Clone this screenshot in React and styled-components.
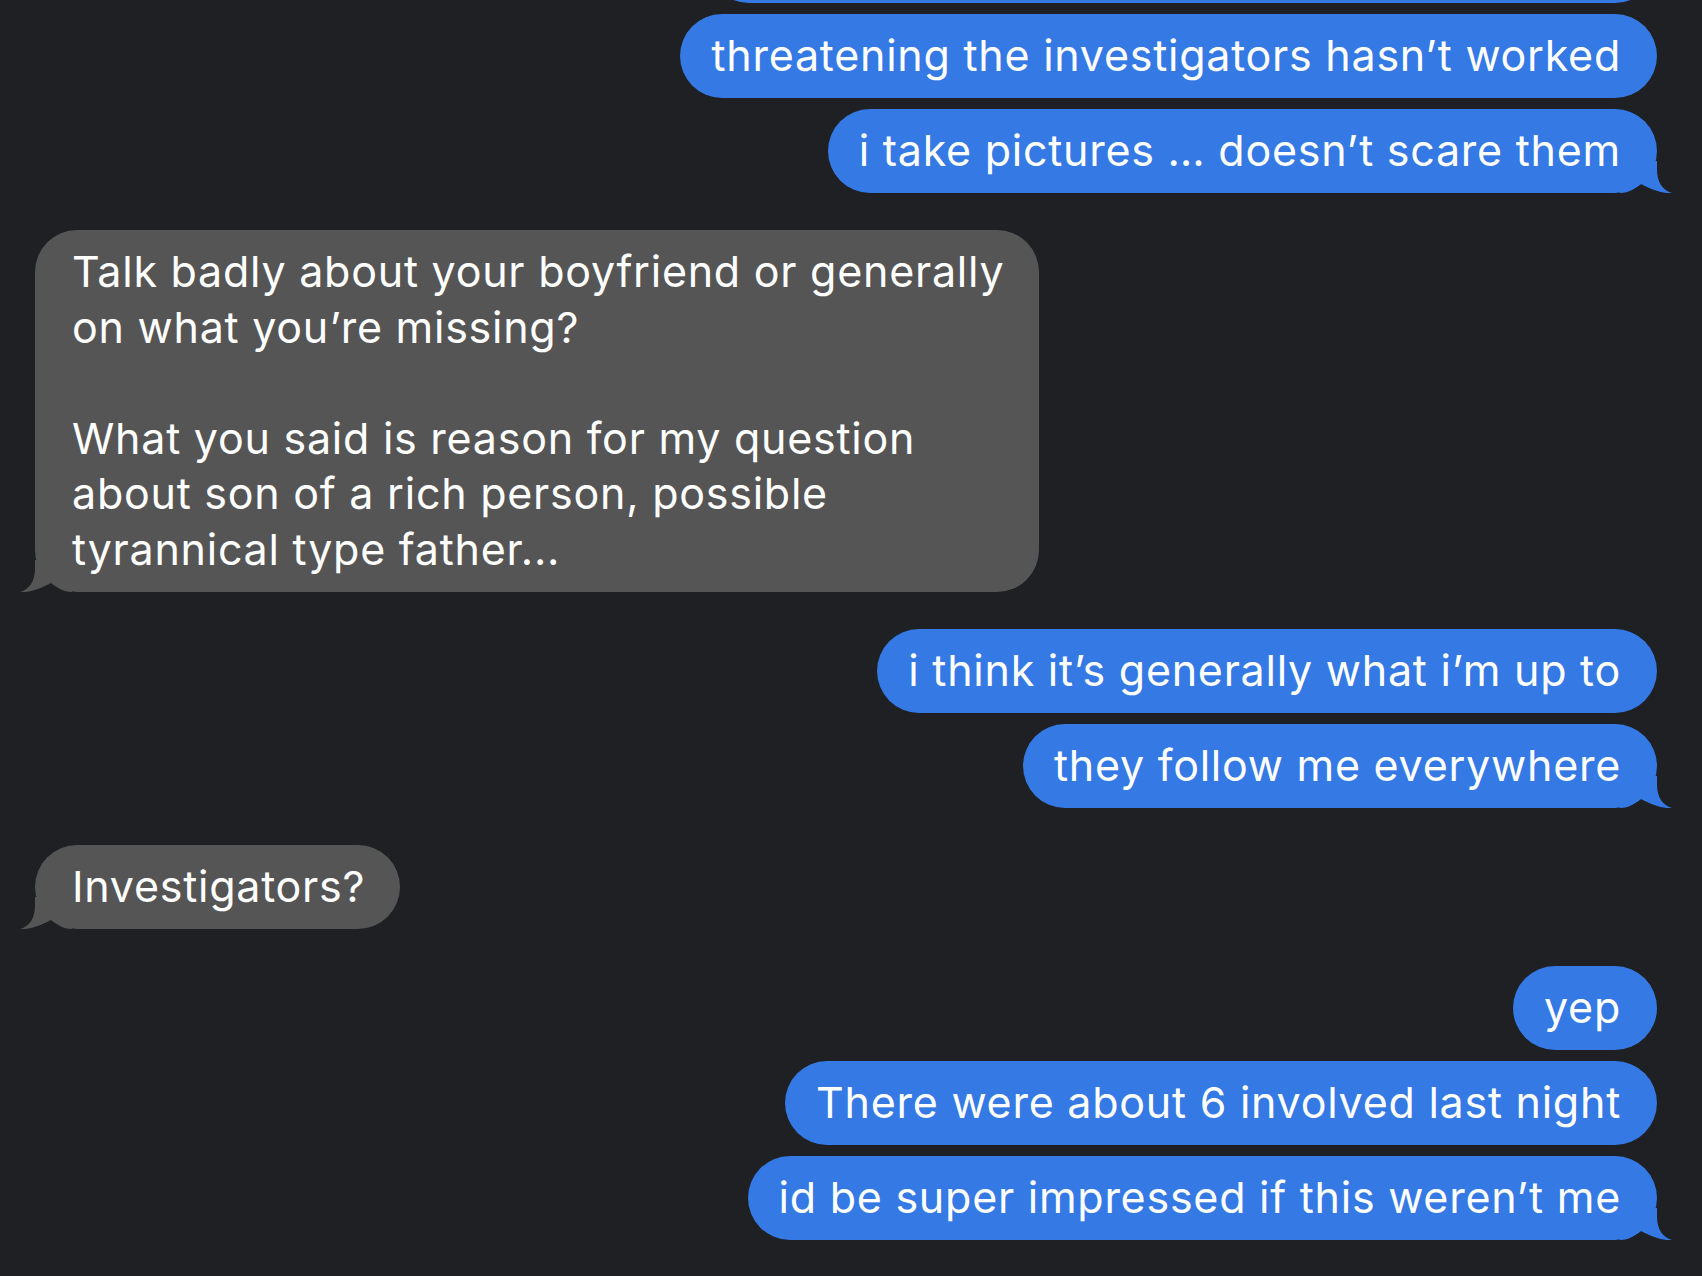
import styled, { createGlobalStyle } from "styled-components";

const GlobalStyle = createGlobalStyle`
  html, body {
    margin: 0;
    padding: 0;
    background: #1f2023;
  }
  body {
    font-family: Inter, "Noto Sans", "Liberation Sans", sans-serif;
    -webkit-font-smoothing: antialiased;
  }
`;

const Screen = styled.div`
  width: 1702px;
  height: 1276px;
  overflow: hidden;
  background: #1f2023;
  box-sizing: border-box;
  padding: 0 45px 0 35px;
`;

const Thread = styled.div`
  display: flex;
  flex-direction: column;
  gap: 37px;
  margin-top: -81px;
`;

const Group = styled.div`
  display: flex;
  flex-direction: column;
  align-items: ${(p) => (p.$mine ? "flex-end" : "flex-start")};
  gap: 11px;
`;

const Bubble = styled.div`
  position: relative;
  box-sizing: border-box;
  min-height: 84px;
  padding: ${(p) => (p.$mine ? "14.25px 36px 14.25px 31px" : "14.25px 35px 14.25px 37px")};
  border-radius: 42px;
  background: ${(p) => (p.$mine ? "#3479e4" : "#555556")};
  color: #ffffff;
  font-size: 43px;
  line-height: 55.5px;
  letter-spacing: 0.75px;
  white-space: pre-line;
`;

const TailShape = styled.svg`
  position: absolute;
  bottom: 0;
  width: 52px;
  height: 32px;
  ${(p) => (p.$mine ? "right: -15px;" : "left: -15px; transform: scaleX(-1);")}
  fill: ${(p) => (p.$mine ? "#3479e4" : "#555556")};
`;

function Tail({ mine }) {
  return (
    <TailShape $mine={mine} viewBox="0 0 52 32">
      <path d="M0,0 H37 V8 C37,21 42,29 52,32 C44,33 32,29 21,23 C16,27 9,32 0,32 Z" />
    </TailShape>
  );
}

function Message({ mine, tail, children }) {
  return (
    <Bubble $mine={mine}>
      {children}
      {tail && <Tail mine={mine} />}
    </Bubble>
  );
}

const groups = [
  {
    mine: true,
    items: [
      "they sit in the car behind me again tonight",
      "threatening the investigators hasn\u2019t worked",
      "i take pictures \u2026 doesn\u2019t scare them",
    ],
  },
  {
    mine: false,
    items: [
      "Talk badly about your boyfriend or generally\non what you\u2019re missing?\n\nWhat you said is reason for my question\nabout son of a rich person, possible\ntyrannical type father...",
    ],
  },
  {
    mine: true,
    items: ["i think it\u2019s generally what i\u2019m up to", "they follow me everywhere"],
  },
  {
    mine: false,
    items: ["Investigators?"],
  },
  {
    mine: true,
    items: [
      "yep",
      "There were about 6 involved last night",
      "id be super impressed if this weren\u2019t me",
    ],
  },
];

export default function App() {
  return (
    <>
      <GlobalStyle />
      <Screen>
        <Thread>
          {groups.map((g, gi) => (
            <Group key={gi} $mine={g.mine}>
              {g.items.map((text, i) => (
                <Message key={i} mine={g.mine} tail={i === g.items.length - 1}>
                  {text}
                </Message>
              ))}
            </Group>
          ))}
        </Thread>
      </Screen>
    </>
  );
}
